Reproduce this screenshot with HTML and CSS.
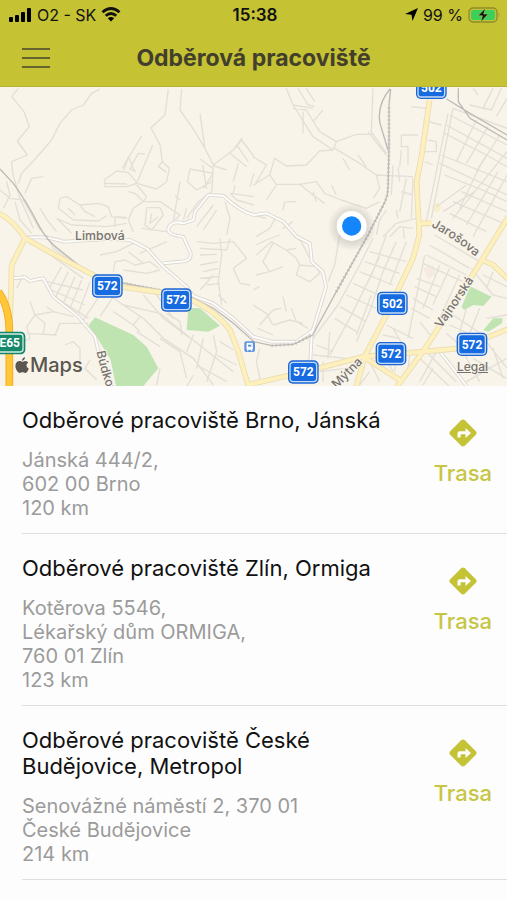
FILE: index.html
```html
<!DOCTYPE html>
<html lang="cs">
<head>
<meta charset="utf-8">
<meta name="viewport" content="width=device-width, initial-scale=1.0">
<title>Odběrová pracoviště</title>
<link rel="stylesheet" href="styles.css">
</head>
<body>
<header class="topbar">
  <div class="status">
    <div class="status-left">
      <svg class="signal" viewBox="0 0 23 14" aria-hidden="true">
        <rect x="0" y="9" width="4" height="5" rx="1"/><rect x="6" y="7" width="4" height="7" rx="1"/>
        <rect x="12" y="4" width="4" height="10" rx="1"/><rect x="18" y="0" width="4" height="14" rx="1"/>
      </svg>
      <span>O2 - SK</span>
      <svg class="wifi" viewBox="0 0 20 15" aria-hidden="true">
        <path d="M1.500 5.300Q10-2.300 18.500 5.300M4.700 8.700q5.300-4.500 10.600 0" fill="none" stroke="#111" stroke-width="2.800"/>
        <path d="M6.800 11.200q3.200-2.600 6.400 0L10 14.600z"/>
      </svg>
    </div>
    <div class="clock">15:38</div>
    <div class="status-right">
      <svg class="arrow" viewBox="0 0 13 13" aria-hidden="true"><path d="M13 0 7.500 13 6.500 6.700 0 6z"/></svg>
      <span>99 %</span>
      <svg class="battery" viewBox="0 0 33 16" aria-hidden="true">
        <rect x="1" y="1" width="28" height="14" rx="4" fill="none" stroke="#8d8a2a" stroke-width="1.300"/>
        <rect x="3" y="3" width="24" height="10" rx="2" fill="#3ccf5c"/>
        <path d="M30.800 5.500q1.600 2.500 0 5z" fill="#8d8a2a"/>
        <path d="M17.500 1 10 8.800h4.400L12.800 15l7.400-8h-4.500z" fill="#111" stroke="#a9d14a" stroke-width=".6"/>
      </svg>
    </div>
  </div>
  <div class="navbar">
    <button class="menu" aria-label="Menu"><span></span><span></span><span></span></button>
    <h1>Odběrová pracoviště</h1>
  </div>
</header>

<section class="map" aria-label="Mapa">
  <svg class="map-canvas" viewBox="0 6 1521 897">
    <defs>
      <g id="shield">
        <rect x="-46" y="-35" width="92" height="70" rx="15" fill="#1a66d6"/>
        <rect x="-42" y="-31" width="84" height="62" rx="12" fill="#c8dcf5"/>
        <rect x="-38" y="-27" width="76" height="54" rx="8" fill="#176be0"/>
      </g>
      <radialGradient id="halo"><stop offset=".5" stop-color="#777" stop-opacity=".3"/><stop offset="1" stop-color="#777" stop-opacity="0"/></radialGradient>
    </defs>
    <rect y="6" width="1521" height="897" fill="#f8f4ea"/>

    <!-- parks -->
    <g fill="#bfe4b1">
      <path d="M265 722 285 697 400 750 440 785 475 850 430 903H348L332 825 290 755z"/>
      <path d="M565 668 600 670 660 722 625 740 560 735z"/>
      <path d="M1385 665 1410 604 1475 635 1450 663 1420 660 1392 675z"/>
      <path d="M1450 735 1480 700 1508 700 1506 715 1465 740z"/>
    </g>
    <path d="M1270 550 1300 540 1308 568 1285 583z" fill="#f6e9df"/>
    <circle cx="1310" cy="367" r="13" fill="#f5eaa8" opacity=".5"/>

    <!-- side streets, north west -->
    <g class="street">
      <path d="M55 10 35 35 72 80 88 125 52 168 82 210 35 230 38 265 60 340 100 430M300 12 275 25 250 60 215 75 180 115 155 165 100 228 65 265 55 295M75 325 95 280 130 275"/>
      <path d="M0 315 30 340 70 345 120 435M20 290 30 330 10 370M45 350 60 405 95 445M120 370 145 410 170 440"/>
      <path d="M505 12 495 90 453 128 480 180 487 230 508 250 500 290 470 312 410 295 380 305 315 305 313 285 350 258 385 262 412 295M487 230 475 245 500 262"/>
      <path d="M545 12 540 75 575 125 612 185 640 240 635 320 595 350 560 400M600 85 614 185M425 153 366 250M372 256 385 215 405 260 388 250M390 250 415 205 435 207M458 180 412 290M313 295 380 297"/>
      <path d="M640 240 700 195 727 158M700 195 725 165 762 215M710 180 745 230M690 205 740 245M715 235 700 290M640 242 680 255M600 222 638 250M570 252 640 265M562 290 570 252M562 290 590 315 635 290M608 240 620 312M640 265 610 310M762 265 750 305"/>
      <path d="M175 370 180 340 200 335 240 360 295 355 325 365 335 395 380 400M175 370 220 405 295 408 320 392M240 360 255 380 285 395M170 400 215 420 320 425 380 415M170 400 200 430 215 445M335 395 380 397M345 395 345 425M205 370 225 390"/>
      <path d="M430 350 400 370 385 405 400 440M430 350 405 325 385 320M430 350 480 350 540 390 525 405M410 300 440 335 430 350M440 368 435 420 455 435 490 390 480 368 440 368M455 385 450 415 475 395M425 430 500 440M540 290 520 410M525 330 540 345"/>
      <path d="M690 325 762 335M690 325 710 345 762 360M705 300 700 325M640 360 590 425M650 375 610 435M675 350 690 400 680 450M560 370 550 405"/>
    </g>

    <!-- side streets, north east -->
    <g class="street" transform="translate(759 0)">
      <path d="M100 10 120 60 180 70M120 60 180 155 240 195M135 10 165 60 185 65M160 10 185 50M150 80 150 145M210 75 180 110M120 70 160 75 200 140 250 170 240 195M240 195 200 198 160 240 100 243 65 220 50 270 0 300M250 170 310 148 360 148M345 140 400 210M245 190 320 235 370 270 480 275M270 220 290 255M315 210 340 245M360 10 355 140 400 205M0 215 40 240 5 300M50 270 70 298 140 298 180 330 215 355M140 298 190 290 215 325 265 345 340 370 380 350M370 270 380 310 360 340M70 300 40 345M100 350 130 350M95 350 90 375M235 300 250 330M180 320 190 350"/>
      <path d="M445 150H495M445 150V185H465V240M445 195 440 245M420 240 415 330M435 245 440 290M460 280 440 380M480 280 475 400M445 320 480 330M430 375 435 400M475 65 520 70M510 105 565 120M525 165 550 170 550 200 515 200M515 230 540 240M585 85 520 410M600 70 535 400"/>
      <path d="M600 70 762 130M590 90 762 180M580 120 762 220M575 145 700 210 762 245M565 210 762 290M560 235 762 330M575 270 700 320 762 350M640 300 550 365M665 320 570 380M762 200 600 400M740 150 680 245 620 370M705 125 640 235M670 105 610 230M762 270 660 455M735 260 640 420M600 350 762 420M625 320 762 380M590 385 700 440M700 210 670 260M720 10 690 70M745 10 715 75 690 68M650 60 700 72M660 10 675 30M730 95 762 40"/>
      <path d="M370 450 380 405 400 375M390 455 430 415 490 400M410 455 440 425 480 430M450 430 455 460M0 390 40 400M10 455 50 430 70 395M90 430 120 410"/>
    </g>

    <!-- side streets, south west -->
    <g class="street" transform="translate(0 450)">
      <path d="M140 0 160 40 280 120M110 30 250 130M185 95 145 165M205 110 165 190M225 125 190 205M245 135 210 220M270 140 235 235M300 180 250 255M140 140 250 165M155 165 255 210M170 190 265 250M340 185 300 245M300 160 370 210 480 235 560 300 700 410M370 210 430 250 490 310 580 370 640 450M340 230 400 270 420 245M400 270 420 290M430 180 490 250 570 310M470 180 520 250"/>
      <path d="M90 200 105 240 80 275 90 310 70 320M105 240 160 230 220 245M160 230 140 215M105 240 135 265 130 295M80 295 170 300M165 300 180 265 265 265M195 330 220 320 240 340 240 390M270 375 255 400 290 435M50 160 70 120"/>
      <path d="M340 110 345 80 375 75 405 90 450 80 475 100M385 50 430 85M370 105 440 115 480 105M300 60 350 50 400 25M420 55 500 20M590 20 640 25 700 20M600 40 680 45 690 10M600 60 650 58M600 90 655 80M610 110 655 100M600 130 655 125M620 150 660 145M660 10 665 60 655 140 665 210M655 180 680 205M700 20 740 70 700 100 720 145 750 150M600 165 640 120"/>
      <path d="M480 310 540 350 560 430M500 235 540 260 545 300M580 300 560 350M610 310 590 400M640 300 650 350 620 440M590 390 680 440M660 320 700 345M650 360 710 390M580 420 560 455M480 400 470 450M410 290 480 335"/>
    </g>

    <!-- side streets, south east -->
    <g class="street" transform="translate(759 450)">
      <path d="M10 30 40 15 80 0M10 60 55 20 100 45 130 40M60 25 30 80 50 110 10 120M50 110 90 95M100 45 130 70 140 90M140 90 130 120 170 140 200 115 190 95 140 90M0 210 40 235 60 270M20 270 60 225 85 220M60 270 110 255 150 265M115 220 130 260 165 280M90 185 100 230M0 165 20 155M15 280 60 300M120 0 145 20 170 70M20 340 10 380 25 450M260 0 245 90 225 140"/>
      <path d="M360 10 320 90 255 210 180 310M400 0 360 110 290 250 230 360M430 20 390 110 350 230 310 320M460 20 410 150M350 50 460 80M335 80 440 115M320 110 420 150M300 145 400 190M280 180 370 220M260 215 340 260M245 250 310 290M380 65 330 170M355 180 310 300M230 290 225 370M190 330 240 350M180 360 280 370M200 410 280 400M210 380 210 440"/>
      <path d="M515 60 465 310M490 130 560 155M485 155 550 185M480 190 540 225M475 220 530 250M510 85 630 140M520 60 640 120M530 30 650 100M545 0 680 80M590 100 540 210M620 120 560 250M560 90 510 220M500 260 540 310M400 270 480 310M390 300 440 310M420 280 450 330M655 100 720 180 762 190M690 120 762 155M640 220 610 330M680 220 640 320M600 240 690 300M590 270 700 320M580 295 620 330M700 250 762 240M720 110 700 160"/>
      <path d="M350 380 380 440M400 370 420 410M430 370 425 410M470 360 465 400M500 370 590 455M520 350 610 440M550 350 500 440M630 350 680 440M660 370 760 430M720 340 750 430M700 320 762 400M640 440 762 370M350 410 320 450M540 400 510 450"/>
    </g>

    <!-- collector roads -->
    <g class="road-edge">
      <path d="M80 458Q140 452 190 470L330 462 390 465 440 490 490 545 560 605 580 633 640 655 700 700 760 755 815 770H890L940 735"/>
      <path d="M35 580 75 577 90 588 130 580 160 635 235 695 285 755 300 820"/>
      <path d="M490 535 540 530Q575 530 572 505L550 455Q500 450 505 430 515 405 550 415L580 405 585 380 625 330 670 332Q720 380 762 390L800 385 850 410 890 455 930 475 935 530 968 560 978 605 950 700 935 745 930 850"/>
      <path d="M1320 800 1400 903"/>
    </g>
    <g class="road">
      <path d="M80 458Q140 452 190 470L330 462 390 465 440 490 490 545 560 605 580 633 640 655 700 700 760 755 815 770H890L940 735"/>
      <path d="M35 580 75 577 90 588 130 580 160 635 235 695 285 755 300 820"/>
      <path d="M490 535 540 530Q575 530 572 505L550 455Q500 450 505 430 515 405 550 415L580 405 585 380 625 330 670 332Q720 380 762 390L800 385 850 410 890 455 930 475 935 530 968 560 978 605 950 700 935 745 930 850"/>
      <path d="M1320 800 1400 903"/>
    </g>

    <!-- railways -->
    <g class="rail">
      <path d="M0 252 40 295Q80 350 110 410T185 500L280 575 400 600 560 630 640 670 700 715 762 770 815 782 880 778 938 750 1009 620 1104 450 1155 350Q1164 330 1164 310L1167 190V60L1172 12"/>
      <path d="M1170 12Q1130 60 1140 115L1164 195M1340 42 1410 85 1521 150M1375 10V50L1410 100 1521 165"/>
    </g>
    <path class="rail-ties" d="M1009 620 1104 450 1155 350Q1164 330 1164 310L1167 190V60M380 597 480 615M815 782 880 778 938 750"/>

    <!-- main roads -->
    <g class="main-edge">
      <path d="M-5 384Q40 405 75 460L160 507 280 570 360 605 480 622 560 640Q640 670 690 735L715 800 745 903M75 460 35 540 30 720"/>
      <path d="M1289 45 1265 210 1250 290 1258 450 1239 520 1159 690 1094 815 1069 905M1258 415H1295M740 900 909 862 1089 815 1269 800 1379 790 1525 732M1525 395 1440 535 1269 800 1190 905M1440 522 1480 540 1525 583M1089 815 1199 885"/>
    </g>
    <g class="main">
      <path d="M-5 384Q40 405 75 460L160 507 280 570 360 605 480 622 560 640Q640 670 690 735L715 800 745 903M75 460 35 540 30 720"/>
      <path d="M1289 45 1265 210 1250 290 1258 450 1239 520 1159 690 1094 815 1069 905M1258 415H1295M740 900 909 862 1089 815 1269 800 1379 790 1525 732M1525 395 1440 535 1269 800 1190 905M1440 522 1480 540 1525 583M1089 815 1199 885"/>
    </g>
    <path d="M-5 620Q28 665 28 740V910" fill="none" stroke="#efa62a" stroke-width="23"/>
    <path d="M-5 620Q28 665 28 740V910" fill="none" stroke="#ffc636" stroke-width="18"/>

    <!-- street names -->
    <g class="street-name">
      <path id="jarosova" d="M1293 425Q1360 458 1425 514" fill="none" stroke="none"/>
      <path id="budkova" d="M290 800Q300 855 328 930" fill="none" stroke="none"/>
      <text transform="translate(225 466)">Limbová</text>
      <text><textPath href="#jarosova">Jarošova</textPath></text>
      <text transform="translate(1324 731) rotate(-56)">Vajnorská</text>
      <text><textPath href="#budkova">Búdková</textPath></text>
      <text transform="translate(1010 912) rotate(-45)">Mýtna</text>
    </g>

    <!-- station -->
    <rect x="733" y="769" width="32" height="32" rx="6" fill="#5c94e0"/>
    <path d="M741 775h16v18h-16zM741 797h4m8 0h4" fill="#fff" stroke="#fff" stroke-width="3"/>
    <path d="M744 779h10v6h-10z" fill="#5c94e0"/>

    <!-- road numbers -->
    <g class="shield-text">
      <use href="#shield" x="322" y="603"/><text x="322" y="616">572</text>
      <use href="#shield" x="529" y="645"/><text x="529" y="658">572</text>
      <use href="#shield" x="1294" y="7"/><text x="1294" y="20">502</text>
      <use href="#shield" x="1177" y="655"/><text x="1177" y="668">502</text>
      <use href="#shield" x="1173" y="806"/><text x="1173" y="819">572</text>
      <use href="#shield" x="1416" y="778"/><text x="1416" y="791">572</text>
      <use href="#shield" x="910" y="861"/><text x="910" y="874">572</text>
      <rect x="-20" y="740" width="96" height="68" rx="14" fill="#12856a"/>
      <rect x="-20" y="745" width="91" height="58" rx="10" fill="#d3ebdf"/>
      <rect x="-20" y="749" width="87" height="50" rx="7" fill="#148a6b"/>
      <text x="29" y="787">E65</text>
    </g>

    <!-- current position -->
    <circle cx="1055" cy="426" r="72" fill="url(#halo)"/>
    <circle cx="1055" cy="423" r="45" fill="#fff"/>
    <circle cx="1055" cy="423" r="29" fill="#1485fa"/>
  </svg>
  <div class="map-brand">
    <svg viewBox="0 0 14 16" aria-hidden="true"><path d="M10 0Q10.200 2.800 7 4 6.900 1.200 10 0M7.200 4.700C8.200 4.700 9 3.800 10.500 3.900Q12.400 4 13.300 5.500C10.700 7 11.100 10.300 13.800 11.400 13 13.800 11.500 15.900 10.200 15.900 9.200 15.900 8.600 15.300 7.500 15.300S5.700 15.900 4.800 15.900C3 16 .400 12 .400 8.900 .400 5.500 2.500 4 4.400 4 5.600 4 6.400 4.700 7.200 4.700"/></svg>
    <span>Maps</span>
  </div>
  <a class="map-legal" href="#">Legal</a>
</section>

<main class="places">
  <article class="place">
    <div class="info">
      <h2>Odběrové pracoviště Brno, Jánská</h2>
      <p>Jánská 444/2,<br>602 00 Brno</p>
      <p>120 km</p>
    </div>
    <a class="route" href="#">
      <svg viewBox="0 0 28 28" aria-hidden="true"><path class="sign" d="M12.200 1.200q1.800-1.600 3.600 0l11 11q1.600 1.800 0 3.600l-11 11q-1.800 1.600-3.600 0l-11-11q-1.600-1.800 0-3.600z"/><path class="turn" d="M8.500 18.500v-4q0-2.200 2.200-2.200h5.800v-3.200l5.500 4.900-5.500 4.900v-3.600h-4.900v3.200z"/></svg>
      <span>Trasa</span>
    </a>
  </article>
  <article class="place">
    <div class="info">
      <h2>Odběrové pracoviště Zlín, Ormiga</h2>
      <p>Kotěrova 5546,<br>Lékařský dům ORMIGA,<br>760 01 Zlín</p>
      <p>123 km</p>
    </div>
    <a class="route" href="#">
      <svg viewBox="0 0 28 28" aria-hidden="true"><path class="sign" d="M12.200 1.200q1.800-1.600 3.600 0l11 11q1.600 1.800 0 3.600l-11 11q-1.800 1.600-3.600 0l-11-11q-1.600-1.800 0-3.600z"/><path class="turn" d="M8.500 18.500v-4q0-2.200 2.200-2.200h5.800v-3.200l5.500 4.900-5.500 4.900v-3.600h-4.900v3.200z"/></svg>
      <span>Trasa</span>
    </a>
  </article>
  <article class="place">
    <div class="info">
      <h2>Odběrové pracoviště České Budějovice, Metropol</h2>
      <p>Senovážné náměstí 2, 370 01<br>České Budějovice</p>
      <p>214 km</p>
    </div>
    <a class="route" href="#">
      <svg viewBox="0 0 28 28" aria-hidden="true"><path class="sign" d="M12.200 1.200q1.800-1.600 3.600 0l11 11q1.600 1.800 0 3.600l-11 11q-1.800 1.600-3.600 0l-11-11q-1.600-1.800 0-3.600z"/><path class="turn" d="M8.500 18.500v-4q0-2.200 2.200-2.200h5.800v-3.200l5.500 4.900-5.500 4.900v-3.600h-4.900v3.200z"/></svg>
      <span>Trasa</span>
    </a>
  </article>
</main>
</body>
</html>
```

FILE: styles.css
```css
* { box-sizing: border-box; }
body {
  margin: 0;
  font-family: Inter, "Liberation Sans", sans-serif;
  background: #fdfdfd;
  color: #111;
}
h1, h2, p { margin: 0; }
a { text-decoration: none; }
svg { display: block; flex: none; }

/* top bar */
.topbar {
  background: #c5c334;
  border-bottom: 1px solid #b5b338;
}
.status {
  display: grid;
  grid-template-columns: 1fr auto 1fr;
  align-items: center;
  height: 29px;
  padding: 0 6px 0 9px;
  font-size: 16px;
}
.status-left, .status-right {
  display: flex;
  align-items: center;
  gap: 5px;
}
.status-right { justify-content: flex-end; }
.clock { font-size: 17px; font-weight: 600; }
.signal { width: 23px; height: 14px; }
.wifi { width: 20px; height: 15px; }
.arrow { width: 13px; height: 13px; }
.battery { width: 33px; height: 16px; }
.navbar {
  display: grid;
  grid-template-columns: 50px 1fr 50px;
  align-items: center;
  height: 57px;
}
.navbar h1 {
  font-size: 23px;
  font-weight: 700;
  text-align: center;
  color: #433f2c;
}
.menu {
  display: flex;
  flex-direction: column;
  gap: 7px;
  padding: 0 0 0 22px;
  background: none;
  border: none;
  cursor: pointer;
}
.menu span {
  width: 28px;
  height: 2px;
  background: #66632d;
}

/* map */
.map {
  position: relative;
  overflow: hidden;
}
.map-canvas { width: 100%; }
.street { fill: none; stroke: #e3dfd7; stroke-width: 4; stroke-linejoin: round; }
.road-edge { fill: none; stroke: #d9d5ce; stroke-width: 11; stroke-linejoin: round; }
.road { fill: none; stroke: #fefdfb; stroke-width: 6; stroke-linejoin: round; }
.rail { fill: none; stroke: #bdbab6; stroke-width: 4; }
.rail-ties { fill: none; stroke: #bdbab6; stroke-width: 9; stroke-dasharray: 3 9; }
.main-edge { fill: none; stroke: #e9dcb2; stroke-width: 17; stroke-linejoin: round; }
.main { fill: none; stroke: #fdf0bd; stroke-width: 12; stroke-linejoin: round; }
.street-name {
  font-size: 37px;
  font-weight: 500;
  fill: #77736f;
  stroke: #f8f4ea;
  stroke-width: 6;
  paint-order: stroke;
}
.shield-text {
  font-family: "Liberation Sans Narrow", Roboto, sans-serif;
  font-size: 36px;
  font-weight: 700;
  fill: #fff;
  text-anchor: middle;
}
.map-brand {
  position: absolute;
  left: 15px;
  bottom: 8px;
  display: flex;
  align-items: center;
  gap: 1px;
  font-size: 20px;
  line-height: 26px;
  font-weight: 500;
  color: #5c5650;
}
.map-brand svg { width: 14px; height: 16px; fill: #5c5650; }
.map-legal {
  position: absolute;
  right: 19px;
  bottom: 11px;
  font-size: 12px;
  line-height: 16px;
  font-weight: 500;
  color: #77736f;
  text-decoration: underline;
}

/* list */
.place {
  display: flex;
  justify-content: space-between;
  gap: 20px;
  margin-left: 22px;
  padding: 21px 15px 13px 0;
  border-bottom: 1px solid #dedede;
}
.info { flex: 1; max-width: 370px; }
.info h2 {
  margin-bottom: 15px;
  font-size: 22px;
  line-height: 26px;
  font-weight: 400;
}
.info p {
  font-size: 20px;
  line-height: 24px;
  color: #9b9b9b;
}
.route {
  display: flex;
  flex-direction: column;
  align-items: center;
  gap: 12px;
  padding-top: 12px;
  font-size: 22px;
  line-height: 28px;
  font-weight: 500;
  color: #c5c644;
}
.route svg { width: 28px; height: 28px; }
.sign { fill: #c4c336; }
.turn { fill: #fdfdfd; }
```
